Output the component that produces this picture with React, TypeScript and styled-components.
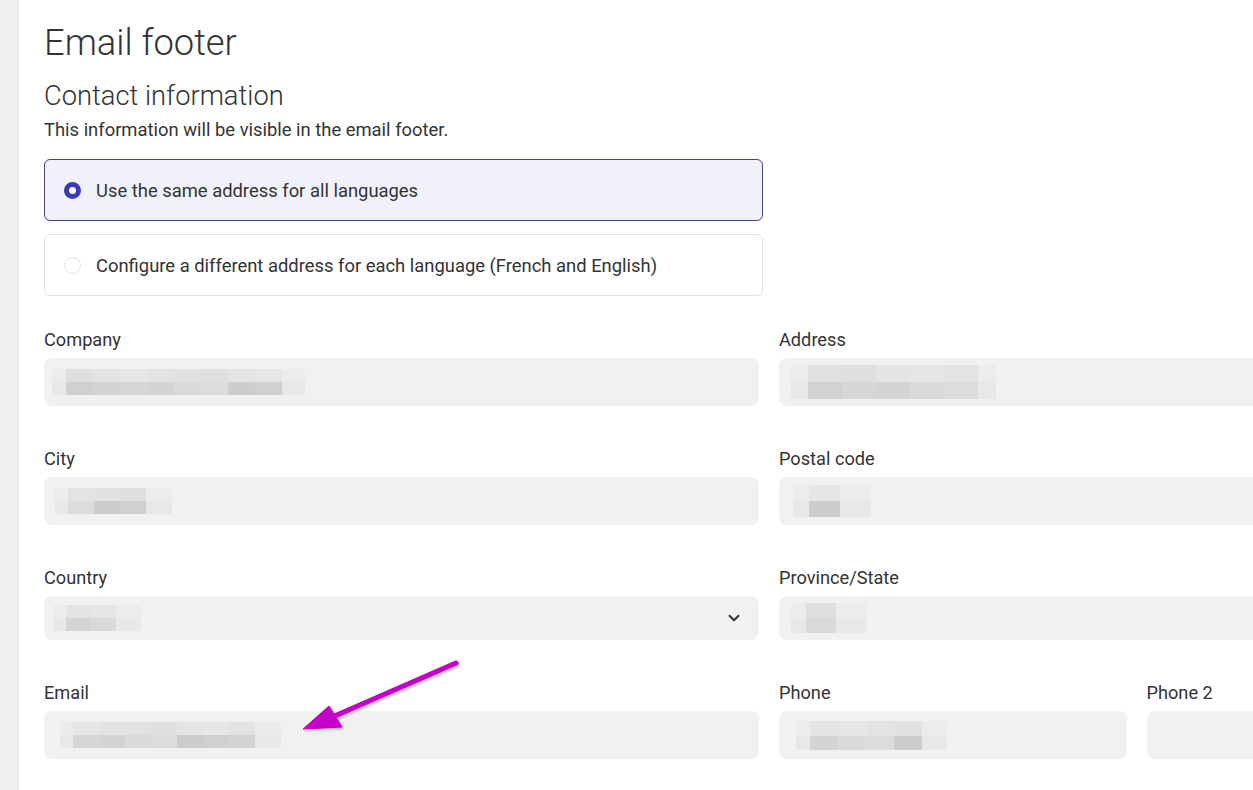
import React from 'react';
import styled, { createGlobalStyle } from 'styled-components';
import { ChevronDown } from 'lucide-react';

const GlobalStyle = createGlobalStyle`
    html, body {
        margin: 0;
        padding: 0;
        background: #ffffff;
        overflow: hidden;
    }
    body {
        font-family: Roboto, "Liberation Sans", Arial, sans-serif;
        color: #333333;
    }
`;

const Shell = styled.div`
    position: relative;
    display: flex;
    min-height: 790px;
    width: 1520px;
`;

const Sidebar = styled.div`
    flex: 0 0 18px;
    background: #efefef;
    border-right: 1px solid #e5e5e5;
`;

const Main = styled.main`
    flex: 1;
    padding: 22px 0 40px 25px;
`;

const PageTitle = styled.h1`
    font-size: 36.3px;
    font-weight: 300;
    line-height: 42px;
    color: #333333;
    margin: 0;
`;

const SectionTitle = styled.h2`
    font-size: 27.3px;
    font-weight: 300;
    line-height: 34px;
    color: #333333;
    margin: 15px 0 0 0;
`;

const Hint = styled.p`
    font-size: 18.4px;
    line-height: 24px;
    color: #333333;
    margin: 5px 0 0 0;
`;

const RadioGroup = styled.div`
    display: flex;
    flex-direction: column;
    gap: 13px;
    width: 719px;
    margin-top: 17px;
`;

const RadioCard = styled.label<{ $checked?: boolean }>`
    display: flex;
    align-items: center;
    gap: 15px;
    box-sizing: border-box;
    height: 62px;
    padding: 0 19px;
    border-radius: 6px;
    border: 1px solid ${p => (p.$checked ? '#45458f' : '#e3e3e3')};
    background: ${p => (p.$checked ? '#f1f1fb' : '#ffffff')};
    font-size: 18.4px;
    color: #333333;
    cursor: pointer;
`;

const RadioDot = styled.span<{ $checked?: boolean }>`
    flex: 0 0 auto;
    box-sizing: border-box;
    width: 17px;
    height: 17px;
    border-radius: 50%;
    border: ${p => (p.$checked ? '5px solid #3a3ab8' : '1.5px solid #e2e2e2')};
    background: #ffffff;
`;

const FormGrid = styled.div`
    display: grid;
    grid-template-columns: 715px 715px;
    column-gap: 20px;
    row-gap: 41px;
    margin-top: 32px;
`;

const SubGrid = styled.div`
    display: grid;
    grid-template-columns: 1fr 1fr;
    column-gap: 20px;
`;

const Field = styled.div`
    display: flex;
    flex-direction: column;
    gap: 6px;
`;

const Label = styled.span`
    font-size: 18.2px;
    line-height: 24px;
    color: #333333;
`;

const InputBox = styled.div<{ $short?: boolean; $pad: number }>`
    position: relative;
    display: flex;
    align-items: center;
    box-sizing: border-box;
    height: ${p => (p.$short ? 44 : 48)}px;
    padding-left: ${p => p.$pad}px;
    border-radius: 8px;
    background: #f1f1f1;
`;

const Chevron = styled(ChevronDown)`
    position: absolute;
    right: 16px;
    top: 50%;
    margin-top: -9px;
    color: #333333;
`;

const Arrow = styled.svg`
    position: absolute;
    left: 290px;
    top: 650px;
    overflow: visible;
    pointer-events: none;
`;

const topGreys = ['#e4e4e4', '#e1e1e1', '#e6e6e6', '#dfdfdf', '#e3e3e3'];
const bottomGreys = ['#d2d2d2', '#cdcdcd', '#dadada', '#d6d6d6', '#d0d0d0', '#dcdcdc', '#d4d4d4'];

type MosaicProps = { w: number; h: number; first: number; cell: number; seed: number };

const Mosaic: React.FC<MosaicProps> = ({ w, h, first, cell, seed }) => {
    const rowH = h / 2;
    const rects: React.ReactNode[] = [];
    let x = 0;
    let i = 0;
    while (x < w) {
        const cw = i === 0 ? first : Math.min(cell, w - x);
        const edge = i === 0 || x + cw >= w;
        const top = edge ? '#ececec' : topGreys[(seed + i * 2) % topGreys.length];
        const bottom = edge ? '#e8e8e8' : bottomGreys[(seed + i * 3) % bottomGreys.length];
        rects.push(<rect key={`${i}-t`} x={x} y={0} width={cw} height={rowH} fill={top} />);
        rects.push(<rect key={`${i}-b`} x={x} y={rowH} width={cw} height={rowH} fill={bottom} />);
        x += cw;
        i++;
    }
    return (
        <svg width={w} height={h} shapeRendering="crispEdges">
            {rects}
        </svg>
    );
};

type FieldDef = { label: string; pad: number; mosaic?: MosaicProps; short?: boolean; select?: boolean };

const FormField: React.FC<FieldDef> = ({ label, pad, mosaic, short, select }) => (
    <Field>
        <Label>{label}</Label>
        <InputBox $short={short} $pad={pad}>
            {mosaic && <Mosaic {...mosaic} />}
            {select && <Chevron size={18} strokeWidth={2.6} />}
        </InputBox>
    </Field>
);

const App: React.FC = () => (
    <>
        <GlobalStyle />
        <Shell>
            <Sidebar />
            <Main>
                <PageTitle>Email footer</PageTitle>
                <SectionTitle>Contact information</SectionTitle>
                <Hint>This information will be visible in the email footer.</Hint>

                <RadioGroup>
                    <RadioCard $checked>
                        <RadioDot $checked />
                        Use the same address for all languages
                    </RadioCard>
                    <RadioCard>
                        <RadioDot />
                        Configure a different address for each language (French and English)
                    </RadioCard>
                </RadioGroup>

                <FormGrid>
                    <FormField label="Company" pad={8} mosaic={{ w: 253, h: 26, first: 14, cell: 27, seed: 1 }} />
                    <FormField label="Address" pad={12} mosaic={{ w: 205, h: 34, first: 17, cell: 34, seed: 4 }} />
                    <FormField label="City" pad={11} mosaic={{ w: 117, h: 26, first: 13, cell: 26, seed: 2 }} />
                    <FormField label="Postal code" pad={14} mosaic={{ w: 78, h: 32, first: 16, cell: 31, seed: 5 }} />
                    <FormField label="Country" short select pad={9} mosaic={{ w: 88, h: 26, first: 13, cell: 25, seed: 3 }} />
                    <FormField label="Province/State" short pad={12} mosaic={{ w: 75, h: 30, first: 15, cell: 30, seed: 6 }} />
                    <FormField label="Email" pad={16} mosaic={{ w: 221, h: 26, first: 13, cell: 26, seed: 0 }} />
                    <SubGrid>
                        <FormField label="Phone" pad={17} mosaic={{ w: 151, h: 29, first: 14, cell: 28, seed: 3 }} />
                        <FormField label="Phone 2" pad={17} />
                    </SubGrid>
                </FormGrid>
            </Main>

            <Arrow width="170" height="90" viewBox="0 0 170 90">
                <defs>
                    <filter id="arrowShadow" x="-20%" y="-20%" width="140%" height="140%">
                        <feDropShadow dx="1.5" dy="1.5" stdDeviation="1.2" floodColor="#000000" floodOpacity="0.3" />
                    </filter>
                </defs>
                <g filter="url(#arrowShadow)" fill="#c400c8" stroke="#c400c8">
                    <line x1="166" y1="13" x2="40" y2="68" strokeWidth="5" strokeLinecap="round" />
                    <polygon points="13,79 39,56 52,77" strokeWidth="1" strokeLinejoin="round" />
                </g>
            </Arrow>
        </Shell>
    </>
);

export default App;
